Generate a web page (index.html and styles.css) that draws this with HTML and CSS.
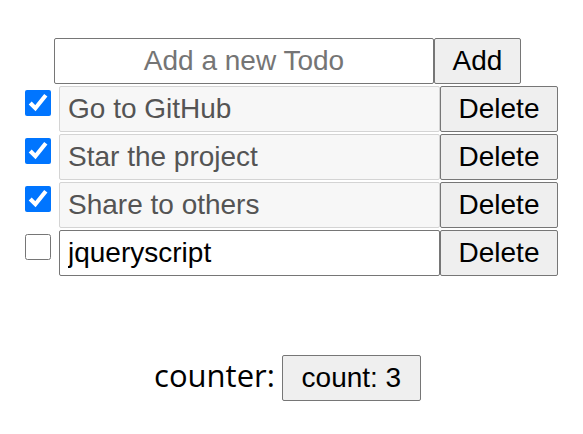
FILE: index.html
```html
<!DOCTYPE html>
<html lang="en">

<head>
    <meta charset="UTF-8">
    <meta name="viewport" content="width=device-width, initial-scale=1">
    <title>Todo</title>
    <link rel="stylesheet" href="styles.css">
</head>

<body>
    <div class="app">
        <div class="add-form">
            <input type="text" class="add-input" placeholder="Add a new Todo">
            <button class="btn add-btn">Add</button>
        </div>

        <div class="todo-list">
            <div class="todo-item">
                <input type="checkbox" class="todo-check" checked>
                <input type="text" class="todo-text done" value="Go to GitHub" readonly>
                <button class="btn delete-btn">Delete</button>
            </div>
            <div class="todo-item">
                <input type="checkbox" class="todo-check" checked>
                <input type="text" class="todo-text done" value="Star the project" readonly>
                <button class="btn delete-btn">Delete</button>
            </div>
            <div class="todo-item">
                <input type="checkbox" class="todo-check" checked>
                <input type="text" class="todo-text done" value="Share to others" readonly>
                <button class="btn delete-btn">Delete</button>
            </div>
            <div class="todo-item">
                <input type="checkbox" class="todo-check">
                <input type="text" class="todo-text" value="jqueryscript">
                <button class="btn delete-btn">Delete</button>
            </div>
        </div>

        <div class="counter">
            <span class="counter-label">counter:</span>
            <button class="btn count-btn">count: 3</button>
        </div>
    </div>
</body>

</html>
```

FILE: styles.css
```css
body {
    margin: 0;
    font-family: "Liberation Sans", Arial, sans-serif;
    background-color: #fff;
}

.app {
    padding-top: 38px;
}

.add-form {
    display: flex;
    justify-content: center;
    padding-right: 8px;
}

.add-input {
    width: 380px;
    height: 46px;
    box-sizing: border-box;
    border: 1px solid #767676;
    border-radius: 2px;
    padding: 0 8px;
    font-family: inherit;
    font-size: 28px;
    text-align: center;
    color: #000;
}

.add-input::placeholder {
    color: #757575;
}

.btn {
    height: 46px;
    box-sizing: border-box;
    background-color: #efefef;
    border: 1px solid #767676;
    border-radius: 2px;
    padding: 0 17px;
    font-family: inherit;
    font-size: 28px;
    color: #000;
}

.add-btn {
    width: 87px;
}

.todo-list {
    width: 533px;
    margin: 2px auto 0;
    display: flex;
    flex-direction: column;
    gap: 2px;
}

.todo-item {
    display: flex;
    height: 46px;
}

.todo-check {
    width: 26px;
    height: 26px;
    margin: 4px 8px 0 0;
}

.todo-text {
    width: 381px;
    height: 46px;
    box-sizing: border-box;
    border: 1px solid #767676;
    border-radius: 2px;
    padding: 0 8px;
    font-family: inherit;
    font-size: 28px;
    color: #000;
    background-color: #fff;
}

.todo-text.done {
    background-color: #f7f7f7;
    border-color: #d4d4d4;
    color: #545454;
}

.delete-btn {
    width: 118px;
}

.counter {
    display: flex;
    justify-content: center;
    align-items: baseline;
    gap: 7px;
    margin-top: 78px;
    padding-right: 8px;
}

.counter-label {
    font-family: "Open Sans", "Noto Sans", sans-serif;
    font-size: 31px;
}

.count-btn {
    width: 139px;
}
```
